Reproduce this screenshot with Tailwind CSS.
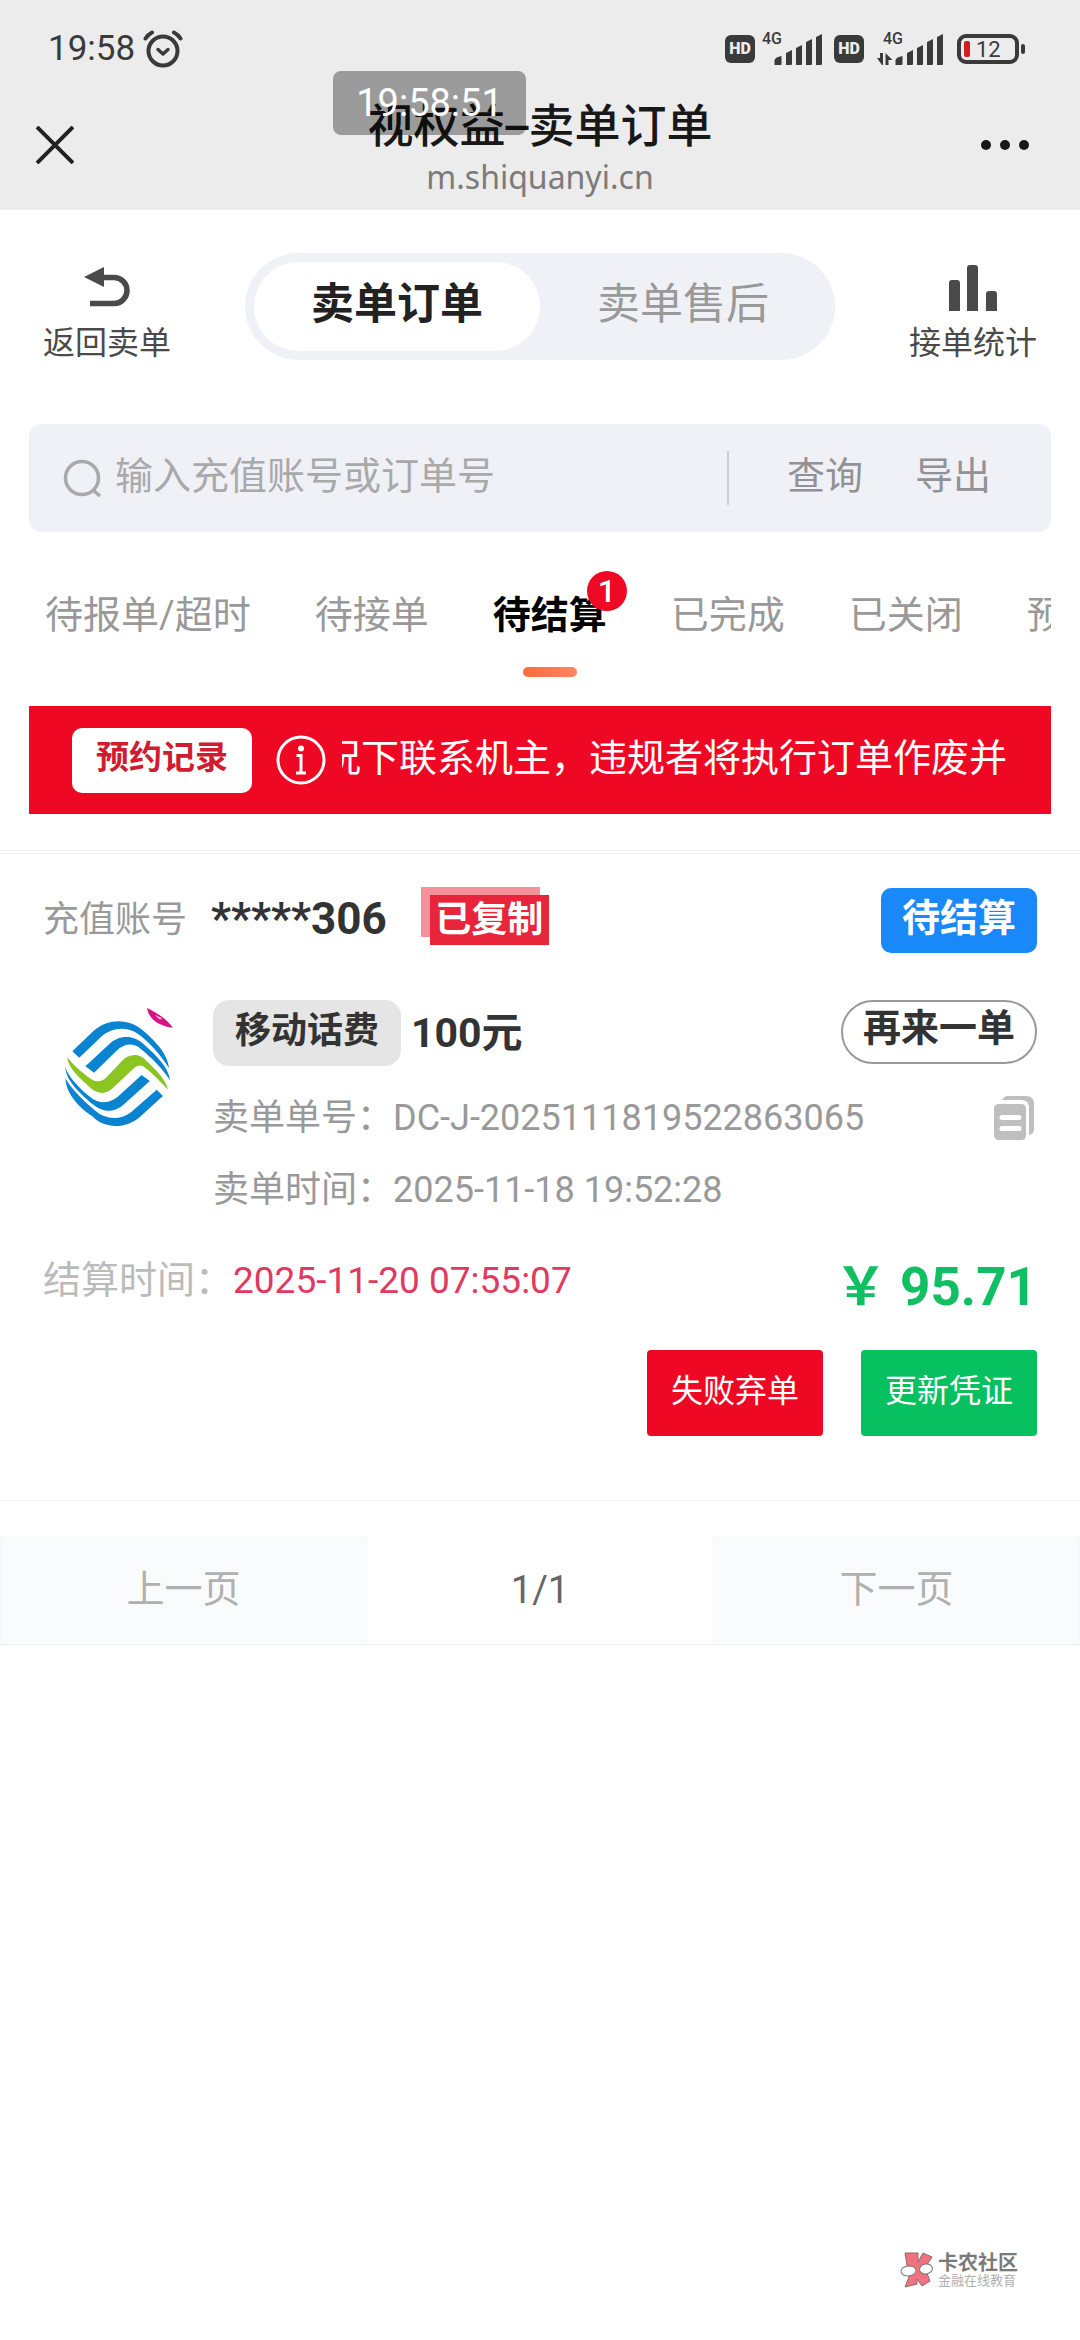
<!DOCTYPE html>
<html lang="zh-CN">
<head>
<meta charset="utf-8">
<meta name="viewport" content="width=device-width, initial-scale=1">
<title>视权益-卖单订单</title>
<script src="https://cdn.jsdelivr.net/npm/@tailwindcss/browser@4"></script>
</head>
<body class="flex min-h-screen flex-col overflow-x-hidden bg-white font-[Roboto,'Noto_Sans_CJK_SC',sans-serif] text-[#333]">

<header class="relative bg-[#ececec]">
  <!-- status bar -->
  <div class="flex h-[98px] items-center justify-between pr-[55px] pl-12 text-[#3a3a3a]">
    <div class="flex items-center gap-2">
      <time class="text-[35px] leading-10">19:58</time>
      <svg class="h-[38px] w-10" viewBox="0 0 40 38" fill="none" stroke="currentColor" stroke-width="4" stroke-linecap="round" stroke-linejoin="round" aria-label="闹钟"><circle cx="20" cy="21" r="14.5"/><path d="M15 19.500l5 4.500 5-4.500" stroke-width="3.500"/><path d="M2.500 8.500Q5 4.500 9 2.500M37.500 8.500Q35 4.500 31 2.500"/></svg>
    </div>
    <div class="flex items-center">
      <span class="flex h-7 w-[30px] items-center justify-center rounded-md bg-[#3a3a3a] text-[16px] font-black text-[#ececec]">HD</span>
      <svg class="ml-[7px] h-8 w-[60px] overflow-visible" viewBox="0 0 60 32" fill="currentColor"><text x="0" y="11" font-size="16" font-weight="500">4G</text><path d="M12.500 32v-5q1-3 7-4v8q0 1-1 1zM24 32V20l6-3v14q0 1-1 1zM34 32V15l6-3v19q0 1-1 1zM44 32V9l6-3v25q0 1-1 1zM54 32V4l6-3v30q0 1-1 1z"/></svg>
      <span class="ml-3 flex h-7 w-[30px] items-center justify-center rounded-md bg-[#3a3a3a] text-[16px] font-black text-[#ececec]">HD</span>
      <svg class="ml-[13px] h-8 w-[66px] overflow-visible" viewBox="0 0 66 32" fill="currentColor"><text x="6" y="11" font-size="16" font-weight="500">4G</text><path d="M0 25h3v-5h3v12H5zM8.500 32V20l7 7h-4v5z"/><path d="M18.500 32v-5q1-3 7-4v8q0 1-1 1zM30 32V20l6-3v14q0 1-1 1zM40 32V15l6-3v19q0 1-1 1zM50 32V9l6-3v25q0 1-1 1zM60 32V4l6-3v30q0 1-1 1z"/></svg>
      <svg class="ml-[14px] h-[30px] w-[68px]" viewBox="0 0 68 30"><rect x="2" y="2" width="58" height="26" rx="7" fill="none" stroke="currentColor" stroke-width="4"/><rect x="7" y="7" width="6" height="16" rx="2" fill="#d41c1c"/><rect x="64" y="10" width="4" height="10" rx="2" fill="currentColor"/><text x="19" y="23" font-size="22" fill="currentColor">12</text></svg>
    </div>
  </div>
  <!-- browser title bar -->
  <div class="grid h-[112px] grid-cols-[1fr_auto_1fr] items-start">
    <button type="button" aria-label="关闭" class="flex h-[94px] items-center pl-9"><svg class="size-[38px]" viewBox="0 0 38 38" stroke="#222" stroke-width="4"><path d="M1 1l36 36M37 1L1 37"/></svg></button>
    <div class="pt-[2px] text-center">
      <h1 class="font-[Inter,'Noto_Sans_CJK_SC',sans-serif] text-[46px] leading-[50px] font-medium text-[#181818]">视权益–卖单订单</h1>
      <p class="font-['Noto_Sans',sans-serif] text-[32px] leading-[54px] text-[#7b7b7b]">m.shiquanyi.cn</p>
    </div>
    <button type="button" aria-label="更多" class="flex h-[94px] items-center justify-self-end pr-[51px]"><svg class="h-[10px] w-12" viewBox="0 0 48 10" fill="#181818"><circle cx="5" cy="5" r="5"/><circle cx="24" cy="5" r="5"/><circle cx="43" cy="5" r="5"/></svg></button>
  </div>
  <!-- floating clock -->
  <div class="absolute top-[71px] left-[333px] flex h-16 w-[193px] items-center justify-center rounded-lg bg-black/34 text-[38px] text-white">19:58:51</div>
</header>

<main class="flex flex-col">
  <div class="flex items-start justify-between px-[43px] pt-[43px]">
    <a href="#" class="flex flex-col items-center gap-[14px] pt-3 text-[#4a4a4a]">
      <svg class="h-[46px] w-12" viewBox="0 0 48 46"><path d="M1 12L21 2v20z" fill="currentColor"/><path d="M20 12.500h11a13 13 0 0 1 0 26H7" fill="none" stroke="currentColor" stroke-width="5.500"/></svg>
      <span class="text-[32px] leading-9">返回卖单</span>
    </a>
    <div class="flex h-[107px] w-[590px] rounded-full bg-[#f0f1f7] p-[9px] text-[43px]">
      <button type="button" class="flex-1 rounded-full bg-white pb-1 font-bold text-[#222]">卖单订单</button>
      <button type="button" class="flex-1 pb-1 text-[#999]">卖单售后</button>
    </div>
    <a href="#" class="flex flex-col items-center gap-[14px] pt-3 text-[#4a4a4a]">
      <svg class="h-[46px] w-12" viewBox="0 0 48 46" fill="currentColor"><path d="M0 46V18q0-3 3-3h5q3 0 3 3v28zM18 46V3q0-3 3-3h5q3 0 3 3v43zM37 46V29q0-3 3-3h5q3 0 3 3v17z"/></svg>
      <span class="text-[32px] leading-9">接单统计</span>
    </a>
  </div>

  <form class="mx-[29px] mt-[63px] flex h-[108px] items-center rounded-xl bg-[#f0f1f6] pr-[60px] pl-[34px] text-[38px] text-[#929295]">
    <svg class="h-[38px] w-10 shrink-0" viewBox="0 0 40 38" fill="none" stroke="#a9a9ab" stroke-width="3.500"><circle cx="19" cy="19" r="16.500"/><path d="M30 31l7 6"/></svg>
    <input type="text" aria-label="搜索订单" placeholder="输入充值账号或订单号" class="ml-3 min-w-0 flex-1 pb-1 placeholder:text-[#a9a9ab]">
    <span class="h-[54px] w-[2px] bg-[#cfcfd3]"></span>
    <button type="submit" class="ml-[58px] pb-1">查询</button>
    <button type="button" class="ml-[52px] pb-1">导出</button>
  </form>

  <nav class="mx-[29px] flex items-start gap-16 overflow-hidden pt-[55px] pb-[29px] pl-4 text-[38px] leading-[56px] whitespace-nowrap text-[#999]">
    <a href="#" class="shrink-0">待报单/超时</a>
    <a href="#" class="shrink-0">待接单</a>
    <a href="#" aria-current="page" class="relative flex shrink-0 flex-col items-center gap-6 font-bold text-black">待结算
      <span class="h-[10px] w-[54px] rounded-full bg-linear-to-r from-[#ff6a40] to-[#ff8660]"></span>
      <span class="absolute -top-4 -right-5 flex size-10 items-center justify-center rounded-full bg-[#ee0a24] text-[32px] leading-8 font-medium text-white">1</span>
    </a>
    <a href="#" class="shrink-0">已完成</a>
    <a href="#" class="shrink-0">已关闭</a>
    <a href="#" class="shrink-0">预约单</a>
  </nav>

  <div class="mx-[29px] flex h-[108px] items-center bg-[#ef0823] pr-11 pl-[43px] text-white">
    <button type="button" class="h-[65px] shrink-0 rounded-[10px] bg-white px-6 pb-1 text-[33px] font-bold text-[#cf1c30]">预约记录</button>
    <svg class="ml-6 size-[50px] shrink-0" viewBox="0 0 50 50" fill="none" stroke="#fff" stroke-width="3"><circle cx="25" cy="25" r="23"/><circle cx="25" cy="13.500" r="3" fill="#fff" stroke="none"/><path d="M20.500 20.500H25V38M20 38h10"/></svg>
    <div class="ml-4 flex min-w-0 flex-1 justify-end overflow-hidden pb-1 text-[38px] whitespace-nowrap">况下联系机主，违规者将执行订单作废并</div>
  </div>

  <div class="mt-9 h-1 border-y border-[#f0f0f0]"></div>

  <article class="border-b border-[#f2f2f2] px-[43px] pt-[34px] pb-16">
    <div class="flex h-[65px] items-center">
      <span class="pb-[2px] text-[36px] text-[#999]">充值账号</span>
      <strong class="ml-6 pb-1 text-[44px] leading-[50px]">*****306</strong>
      <span class="relative mb-2 ml-[43px] flex h-[50px] w-[119px] items-center justify-center self-end bg-[#e8253a] text-[36px] leading-[50px] font-bold text-white shadow-[-9px_-8px_0_#f6919b]">已复制</span>
      <span class="ml-auto flex h-[65px] items-center rounded-[10px] bg-[#1989fa] px-[21px] pb-1 text-[38px] font-bold text-white">待结算</span>
    </div>

    <div class="mt-[47px] flex">
      <div class="w-[170px] shrink-0 pt-[6px] pl-[19px]">
        <svg class="h-[122px] w-[114px]" viewBox="180 495 331 366" preserveAspectRatio="none" role="img" aria-label="中国移动">
          <path fill="#db0f85" d="M427 501C458 517 485 535 502 560C465 556 432 537 427 501z"/><path fill="#fff" opacity=".7" d="M449 521q12 4 22 12-6 3-10 1z"/>
          <g fill="#0a84d0">
            <path d="M210 631L272 569C320 528 378 534 418 571C458 608 486 640 491 682C466 640 430 600 400 578C368 556 325 558 293 588L230 650z"/>
            <path d="M248 676L315 611C345 580 390 580 420 612C455 646 488 676 494 718C470 680 436 646 408 623C388 606 362 606 340 628L273 695z"/>
            <path d="M189 677C196 704 230 742 262 768C292 794 325 786 350 760L411 702L435 720L364 786C336 815 302 817 272 792C232 757 192 720 189 677z"/>
            <path d="M190 712C205 742 245 782 275 808C308 838 350 838 382 812L455 746L473 765L410 824C370 864 304 866 268 826C230 800 192 760 190 712z"/>
          </g>
          <path fill="#8cc421" d="M195 649C215 675 250 706 268 716C284 725 296 722 310 708L354 660C374 638 402 636 422 656C450 684 482 714 488 746C466 722 446 700 422 680C406 668 396 674 384 686L330 739C308 762 284 760 262 740C230 710 198 682 195 649z"/>
        </svg>
      </div>
      <div class="min-w-0 flex-1">
        <div class="flex h-[66px] items-start">
          <span class="flex h-[66px] items-center rounded-2xl bg-[#e5e5e5] px-[22px] pb-1 text-[36px] font-bold">移动话费</span>
          <strong class="ml-[10px] self-center text-[41px] leading-[50px]">100元</strong>
          <button type="button" class="ml-auto h-16 rounded-full border-2 border-[#999] px-5 pb-2 text-[38px] leading-[50px] font-bold">再来一单</button>
        </div>
        <dl class="mt-4 text-[36px] leading-[72px] text-[#999]">
          <div class="flex items-center pr-[3px]">
            <dt>卖单单号：</dt><dd>DC-J-2025111819522863065</dd>
            <dd class="ml-auto"><button type="button" aria-label="复制" class="block"><svg class="h-11 w-10" viewBox="0 0 40 44" fill="#bfbfbf"><path d="M8 4q2-4 6-4h18q8 0 8 8v25q0 5-5 6V12q0-8-8-8z"/><path fill-rule="evenodd" d="M5 8h22q5 0 5 5v26q0 5-5 5H5q-5 0-5-5V13q0-5 5-5zM8 19a2.500 2.500 0 0 0 0 5h17a2.500 2.500 0 0 0 0-5zM8 30a2.500 2.500 0 0 0 0 5h17a2.500 2.500 0 0 0 0-5z"/></svg></button></dd>
          </div>
          <div class="flex"><dt>卖单时间：</dt><dd>2025-11-18 19:52:28</dd></div>
        </dl>
      </div>
    </div>

    <div class="flex h-[124px] items-center justify-between">
      <p class="pb-4 text-[38px] text-[#bbb]">结算时间：<span class="text-[37px] text-[#e03a60]">2025-11-20 07:55:07</span></p>
      <strong class="text-[53px] text-[#10bf61]"><span class="text-[52px]">￥</span> 95.71</strong>
    </div>

    <div class="flex justify-end gap-[38px] text-[32px] text-white">
      <button type="button" class="h-[86px] rounded bg-[#ef0823] px-6 pb-1">失败弃单</button>
      <button type="button" class="h-[86px] rounded bg-[#07c160] px-6 pb-1">更新凭证</button>
    </div>
  </article>

  <nav aria-label="分页" class="mt-9 grid h-[108px] grid-cols-[367fr_346fr_367fr] border-b border-[#f0f1f4] text-[38px] text-[#b0b0b0]">
    <button type="button" disabled class="border border-b-0 border-[#f5f6f9] bg-[#fafbfd] pb-1">上一页</button>
    <span class="flex items-center justify-center text-[#666]">1/1</span>
    <button type="button" disabled class="border border-b-0 border-[#f5f6f9] bg-[#fafbfd] pb-1">下一页</button>
  </nav>
</main>

<footer class="mt-auto flex items-center gap-1 self-end pr-[62px] pb-[52px] font-['Noto_Sans_CJK_SC',sans-serif]">
  <svg class="h-9 w-[34px]" viewBox="0 0 34 36"><path d="M5 1h13v9l5-9 9 4-7 11 5 13-8 5-5-7v5L5 35l4-10z" fill="#f0727f" stroke="#8a6a6c" stroke-width="1"/><ellipse cx="8.500" cy="19" rx="7.500" ry="5" fill="#fff" stroke="#777" transform="rotate(-6 8 19)"/><ellipse cx="26" cy="17" rx="6.500" ry="5" fill="#fff" stroke="#777" transform="rotate(-10 26 17)"/></svg>
  <div>
    <p class="text-[20px] leading-5 font-bold text-[#7a7a7a]">卡农社区</p>
    <p class="text-[13px] leading-4 text-[#b0b0b0]">金融在线教育</p>
  </div>
</footer>
</body>
</html>
